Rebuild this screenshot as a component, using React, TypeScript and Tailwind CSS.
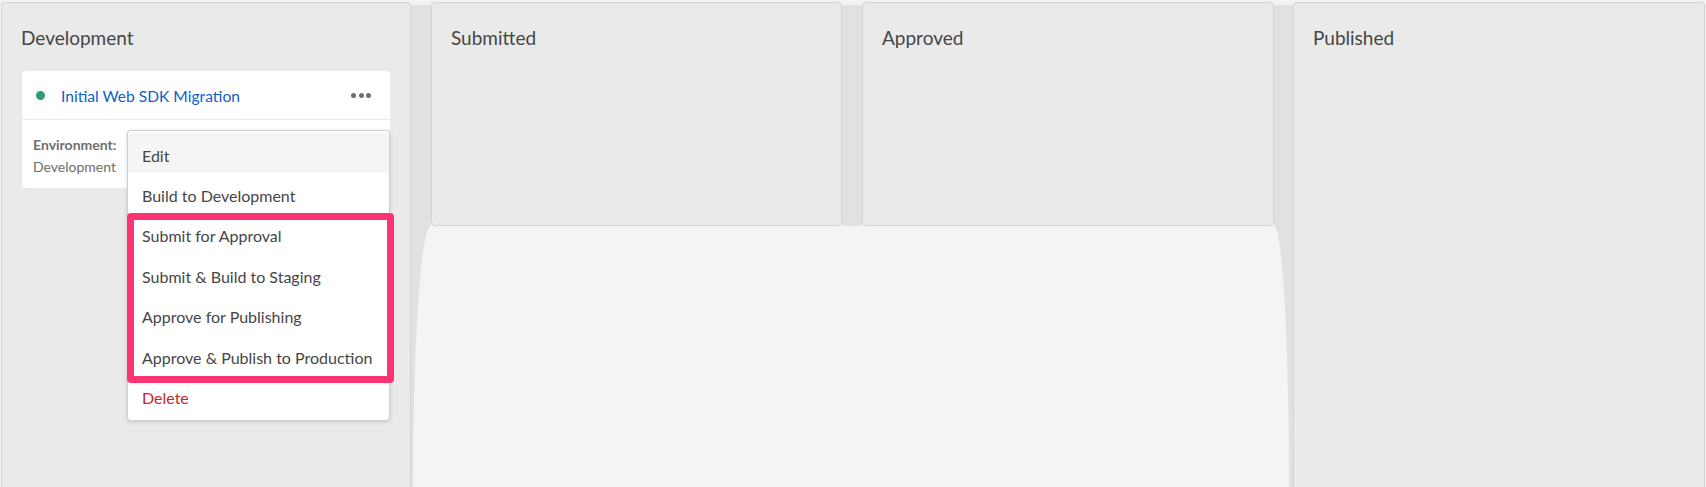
import React from "react";

const FONT = { fontFamily: '"Lato", "Liberation Sans", sans-serif' };

function ColumnHeader({ title }: { title: string }) {
  return (
    <div className="pl-[19px] pt-[23px] text-[19px] leading-[24px] text-[#464646]">{title}</div>
  );
}

function Menu() {
  const items = [
    "Build to Development",
    "Submit for Approval",
    "Submit & Build to Staging",
    "Approve for Publishing",
    "Approve & Publish to Production",
  ];
  return (
    <>
      <div className="absolute left-[105px] top-[59px] w-[263px] rounded-[4px] border border-[#cfcfcf] bg-white pb-[4px] pt-[2px] shadow-[0_1px_4px_rgba(0,0,0,0.15)]">
        <div className="flex h-[40.4px] items-center bg-[#f5f5f5] pl-[14px] pt-[5px] text-[16px] text-[#464646]">
          Edit
        </div>
        {items.map((t) => (
          <div key={t} className="flex h-[40.4px] items-center pl-[14px] pt-[5px] text-[16px] text-[#464646]">
            {t}
          </div>
        ))}
        <div className="flex h-[40.4px] items-center pl-[14px] pt-[5px] text-[16px] text-[#c9252d]">Delete</div>
      </div>
      <div className="pointer-events-none absolute left-[105px] top-[142px] h-[170px] w-[267px] rounded-[4px] border-[7px] border-[#fe3371]" />
    </>
  );
}

function Card() {
  return (
    <div className="relative ml-[20px] mt-[21px] w-[368px] rounded-[4px] bg-white">
      <div className="flex h-[49px] items-center border-b border-[#eaeaea] pl-[14px] pr-[19px] pt-[3px]">
        <span className="mt-[-2px] h-[9px] w-[9px] rounded-full bg-[#2d9d78]" />
        <span className="ml-[16px] text-[15.6px] text-[#1160c7]">Initial Web SDK Migration</span>
        <span className="ml-auto mt-[-2px] flex gap-[2.5px]">
          <span className="h-[5px] w-[5px] rounded-full bg-[#6e6e6e]" />
          <span className="h-[5px] w-[5px] rounded-full bg-[#6e6e6e]" />
          <span className="h-[5px] w-[5px] rounded-full bg-[#6e6e6e]" />
        </span>
      </div>
      <div className="flex h-[68px] flex-col gap-[2px] pl-[11px] pt-[15px] text-[14px] leading-[20px] text-[#6e6e6e]">
        <div className="font-bold">Environment:</div>
        <div>Development</div>
      </div>
      <Menu />
    </div>
  );
}

export default function App() {
  return (
    <div style={FONT} className="flex h-[487px] w-[1706px] overflow-hidden bg-[#f3f3f3] pl-[1px] pr-[1px] pt-[2px]">
      <div className="relative w-[410px] shrink-0 rounded-t-[4px] border border-b-0 border-[#d3d3d3] bg-[#eaeaea]">
        <ColumnHeader title="Development" />
        <Card />
      </div>
      <div className="flex w-[882px] shrink-0 flex-col">
        <div className="flex h-[224px] shrink-0">
          <div className="mt-[3px] w-[20px] bg-[#e1e1e1]" />
          <div className="w-[411px] rounded-[4px] border border-[#d3d3d3] bg-[#eaeaea]">
            <ColumnHeader title="Submitted" />
          </div>
          <div className="mt-[3px] w-[20px] bg-[#e1e1e1]" />
          <div className="w-[412px] rounded-[4px] border border-[#d3d3d3] bg-[#eaeaea]">
            <ColumnHeader title="Approved" />
          </div>
          <div className="mt-[3px] w-[19px] bg-[#e1e1e1]" />
        </div>
        <div className="flex flex-1 bg-[#e1e1e1] pl-[2px] pr-[4px]">
          <div className="flex-1 rounded-tl-[18px_262px] rounded-tr-[15px_262px] bg-[#f4f4f4]" />
        </div>
      </div>
      <div className="relative w-[412px] shrink-0 rounded-t-[4px] border border-b-0 border-[#d3d3d3] bg-[#eaeaea]">
        <ColumnHeader title="Published" />
      </div>
    </div>
  );
}
